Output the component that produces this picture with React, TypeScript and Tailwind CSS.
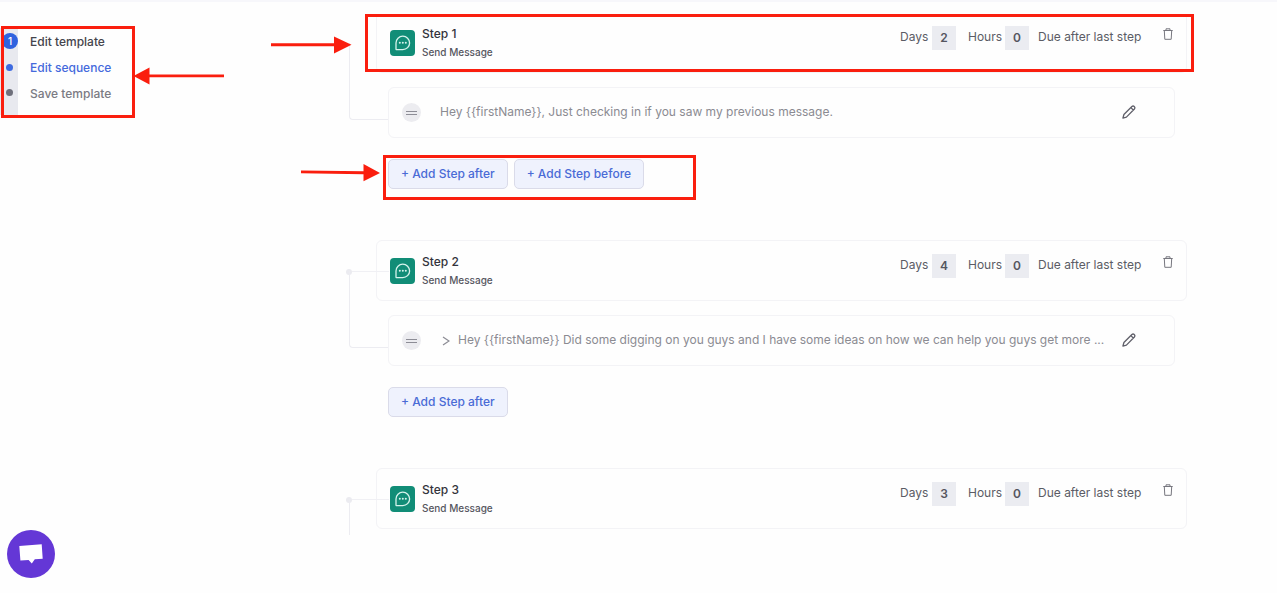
import React from 'react';

type Step = {
  id: number;
  days: number;
  hours: number;
  message?: string;
  expandable?: boolean;
  actions: string[];
};

const steps: Step[] = [
  {
    id: 1,
    days: 2,
    hours: 0,
    message: 'Hey {{firstName}}, Just checking in if you saw my previous message.',
    actions: ['+ Add Step after', '+ Add Step before'],
  },
  {
    id: 2,
    days: 4,
    hours: 0,
    message:
      'Hey {{firstName}} Did some digging on you guys and I have some ideas on how we can help you guys get more ...',
    expandable: true,
    actions: ['+ Add Step after'],
  },
  { id: 3, days: 3, hours: 0, actions: [] },
];

function MessageIcon() {
  return (
    <span className="flex h-[26px] w-[25px] shrink-0 items-center justify-center rounded-[4px] bg-[#118d77]">
      <svg width="16" height="16" viewBox="0 0 16 16" fill="none" stroke="#d6f3ec" strokeWidth="1.3" aria-hidden="true">
        <path d="M1.6 14.6Q1 14.6 1 14V7.9A6.8 6.7 0 1 1 7.8 14.6Z" strokeLinejoin="round" />
        <g fill="#d6f3ec" stroke="none">
          <circle cx="4.8" cy="7.7" r="1" />
          <circle cx="7.8" cy="7.7" r="1" />
          <circle cx="10.8" cy="7.7" r="1" />
        </g>
      </svg>
    </span>
  );
}

function TrashIcon() {
  return (
    <svg width="10" height="12" viewBox="0 0 10 12" fill="none" stroke="#77777f" strokeWidth="1" aria-hidden="true">
      <path d="M0.3 2.5H9.7M3 2.3V0.8H7V2.3M1.3 2.5L1.8 11.3H8.2L8.7 2.5" />
    </svg>
  );
}

function PencilIcon() {
  return (
    <svg width="14" height="14" viewBox="0 0 14 14" fill="none" stroke="#5f5f69" strokeWidth="1.3" strokeLinejoin="round" aria-hidden="true">
      <path d="M0.9 13.1L1.9 9.5L9.9 1.5Q11.1 0.5 12.3 1.6Q13.4 2.8 12.4 4L4.4 12.1ZM8.9 2.6L11.3 5" />
    </svg>
  );
}

function DelayField({ id, label, value, className }: { id: string; label: string; value: number; className: string }) {
  return (
    <div className="flex items-start">
      <label htmlFor={id} className={`${className} leading-6`}>
        {label}
      </label>
      <input
        id={id}
        type="text"
        defaultValue={value}
        className="mt-px h-6 w-6 bg-[#ebecf1] pb-px text-center text-[12px] font-semibold text-[#55565f] outline-none"
      />
    </div>
  );
}

function StepBlock({ step }: { step: Step }) {
  const first = step.id === 1;
  return (
    <section className="relative mb-[51px]">
      <div className={`flex h-[61px] items-start justify-between rounded-md border border-[#f3f3f6] pr-[13px] pl-[13px] ${first ? 'border-t-transparent' : ''}`}>
        <div className="flex">
          <div className="pt-[17px]">
            <MessageIcon />
          </div>
          <div className="ml-[7px] pt-3 leading-[18px]">
            <h2 className="text-[12px] font-medium text-[#33333b]">Step {step.id}</h2>
            <p className="text-[10px] font-medium text-[#55565e]">Send Message</p>
          </div>
        </div>
        <div className="flex shrink-0 items-start pt-3 text-[12px] whitespace-nowrap text-[#5b5c65]">
          <DelayField id={`days-${step.id}`} label="Days" value={step.days} className="w-8" />
          <div className="w-3" />
          <DelayField id={`hours-${step.id}`} label="Hours" value={step.hours} className="w-[37px]" />
          <span className="ml-[9px] w-[105px] leading-6">Due after last step</span>
          <button type="button" aria-label="Delete step" className="mt-[3px] ml-5">
            <TrashIcon />
          </button>
        </div>
      </div>

      {!first && <div className="absolute top-[31px] -left-[27px] h-px w-10 bg-[#f0f0f4]" />}
      {!first && <div className="absolute top-[29px] -left-[30px] h-[6px] w-[6px] rounded-full bg-[#ebebf0]" />}
      <div
        className={`absolute top-[31px] -left-[27px] w-[39px] border-l border-[#ececf1] ${
          step.message ? 'h-[77px] rounded-bl-sm border-b' : 'h-9'
        }`}
      />

      {step.message && (
        <div className="mx-3 mt-[14px] flex h-[51px] items-center rounded-md border border-[#f3f3f6] pr-[38px] pl-[13px]">
          <button
            type="button"
            aria-label="Reorder message"
            className="flex h-[19px] w-[19px] shrink-0 flex-col items-center justify-center gap-[2px] rounded-full bg-[#ececf0]"
          >
            <span className="h-px w-[11px] bg-[#8d8d96]" />
            <span className="h-px w-[11px] bg-[#8d8d96]" />
          </button>
          {step.expandable && (
            <button type="button" aria-label="Expand message" className="ml-[21px] shrink-0">
              <svg width="8" height="10" viewBox="0 0 8 10" fill="none" stroke="#8d8d95" strokeWidth="1.3" aria-hidden="true">
                <path d="M1 1L7 5L1 9" />
              </svg>
            </button>
          )}
          <p className={`min-w-0 flex-1 truncate pb-[2px] text-[12px] text-[#8b8b92] ${step.expandable ? 'ml-2' : 'ml-[19px]'}`}>
            {step.message}
          </p>
          <button type="button" aria-label="Edit message" className="ml-3 shrink-0 pb-[2px]">
            <PencilIcon />
          </button>
        </div>
      )}

      {step.actions.length > 0 && (
        <div className="mx-3 mt-[21px] flex gap-[6px]">
          {step.actions.map((action) => (
            <button
              key={action}
              type="button"
              className="h-[30px] rounded-[5px] border border-[#dadbe9] bg-[#eff2fd] px-3 text-[12px] font-medium text-[#4a6bd6]"
            >
              {action}
            </button>
          ))}
        </div>
      )}
    </section>
  );
}

function Annotations() {
  return (
    <div className="pointer-events-none absolute inset-0" aria-hidden="true">
      <div className="absolute top-[26px] left-px h-[92px] w-[134px] border-3 border-[#fa1e0e]" />
      <div className="absolute top-[14px] right-[83px] left-[365px] h-[58px] border-3 border-[#fa1e0e]" />
      <div className="absolute top-[155px] left-[383px] h-[45px] w-[313px] border-3 border-[#fa1e0e]" />
      <svg className="absolute top-0 left-0" width="400" height="200" viewBox="0 0 400 200" fill="#fa1e0e">
        <path d="M271 43.3H334V36.5L351.5 44.8L334 53.5V46.3H271Z" />
        <path d="M224 74.5H149.5V67.5L133.5 76L149.5 84.5V77.3H224Z" />
        <path d="M301 170.4L363.5 171.3V164L380 173L363.5 181.3V174.2L301 173.3Z" />
      </svg>
    </div>
  );
}

export default function App() {
  return (
    <div className="relative min-h-screen overflow-hidden bg-[#fefefe] font-['Inter',sans-serif]">
      <div className="h-[2px] bg-[#f7f7fb]" />
      <div className="flex">
        <aside className="w-[376px] shrink-0 pt-[26px]">
          <nav className="flex h-[87px]" aria-label="Template progress">
            <div className="flex w-[18px] flex-col items-end bg-[#e8e9ef] pt-[5px]">
              <span className="flex h-4 w-4 items-center justify-center rounded-full bg-[#2f62df] text-[10px] leading-none font-medium text-white">1</span>
              <span className="mt-[15px] mr-[5px] h-[7px] w-[7px] rounded-full bg-[#3d6ae0]" />
              <span className="mt-[18px] mr-[5px] h-[7px] w-[7px] rounded-full bg-[#6e6f7b]" />
            </div>
            <ul className="ml-3 pt-px text-[12px] leading-[26px] font-medium">
              <li><a href="#template" className="text-[#44444c]">Edit template</a></li>
              <li><a href="#sequence" className="text-[#4469dc]">Edit sequence</a></li>
              <li><a href="#save" className="text-[#7b7b83]">Save template</a></li>
            </ul>
          </nav>
        </aside>
        <main className="mr-[90px] min-w-0 flex-1 pt-[10px]">
          {steps.map((step) => (
            <StepBlock key={step.id} step={step} />
          ))}
        </main>
      </div>

      <Annotations />

      <button
        type="button"
        aria-label="Open chat"
        className="fixed bottom-[15px] left-[7px] flex h-12 w-12 items-center justify-center rounded-full bg-[#6437d6]"
      >
        <svg width="24" height="20" viewBox="0 0 24 20" fill="#ffffff" aria-hidden="true">
          <path d="M0.3 2.1L22.7 0.2L23.7 14.8L15.8 15.3L12.8 19.6L9.6 15.9L1.4 16.5Z" />
        </svg>
      </button>
    </div>
  );
}
